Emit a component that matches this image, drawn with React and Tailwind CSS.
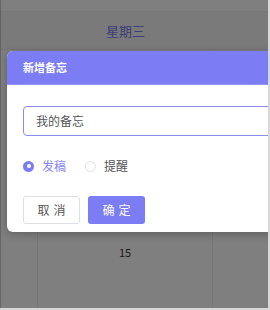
export default function App() {
  const font = { fontFamily: '"Noto Sans CJK SC", "Noto Sans", sans-serif' };
  return (
    <div className="w-[270px] h-[310px] bg-[#d8d8d8] overflow-hidden" style={font}>
      <div className="relative w-[268px] h-[308px] bg-white overflow-hidden">
        {/* calendar underneath */}
        <div className="h-[12px] bg-white border-b border-[#ececec]" />
        <div className="h-[38px] bg-[#f4f4f4] grid grid-cols-[38px_175px_1fr] border-b border-[#ececec]">
          <div />
          <div className="flex items-center justify-center text-[13px] text-[#7b7bf0]">星期三</div>
          <div />
        </div>
        <div className="h-[258px] grid grid-cols-[38px_175px_1fr]">
          <div className="border-r border-[#ececec]" />
          <div className="border-r border-[#ececec] pt-[194px] text-center text-[11px] text-[#333]">15</div>
          <div />
        </div>

        {/* overlay */}
        <div className="absolute inset-0 bg-black/50 border-l border-black/20" />

        {/* dialog */}
        <div className="absolute left-[7px] top-[51px] w-[300px] rounded-[6px] bg-white overflow-hidden shadow-[0_2px_8px_rgba(0,0,0,0.25)]">
          <div className="h-[34px] bg-[#7c7cf4] border-b border-[#9393fa] flex items-center px-[16px] text-[11px] font-bold text-white">
            新增备忘
          </div>
          <div className="px-[16px] pt-[21px] pb-[8px]">
            <div className="h-[30px] rounded-[4px] border border-[#8b8bf4] flex items-center pl-[12px] text-[12px] text-[#555]">
              我的备忘
            </div>
            <div className="mt-[23px] h-[14px] flex items-center text-[12px]">
              <div className="flex items-center gap-[8px]">
                <span className="w-[11px] h-[11px] rounded-full bg-[#7c7cf4] flex items-center justify-center">
                  <span className="w-[4px] h-[4px] rounded-full bg-white" />
                </span>
                <span className="text-[#8585f4]">发稿</span>
              </div>
              <div className="flex items-center gap-[8px] ml-[19px]">
                <span className="w-[11px] h-[11px] rounded-full border border-[#dcdfe6] bg-white" />
                <span className="text-[#555]">提醒</span>
              </div>
            </div>
            <div className="mt-[23px] flex gap-[8px]">
              <div className="w-[57px] h-[28px] rounded-[3px] border border-[#dcdfe6] bg-white flex items-center justify-center text-[12px] text-[#555] tracking-[4px] pl-[4px]">
                取消
              </div>
              <div className="w-[57px] h-[28px] rounded-[3px] bg-[#7c7cf4] flex items-center justify-center text-[12px] text-white tracking-[4px] pl-[4px]">
                确定
              </div>
            </div>
          </div>
        </div>
      </div>
    </div>
  );
}
